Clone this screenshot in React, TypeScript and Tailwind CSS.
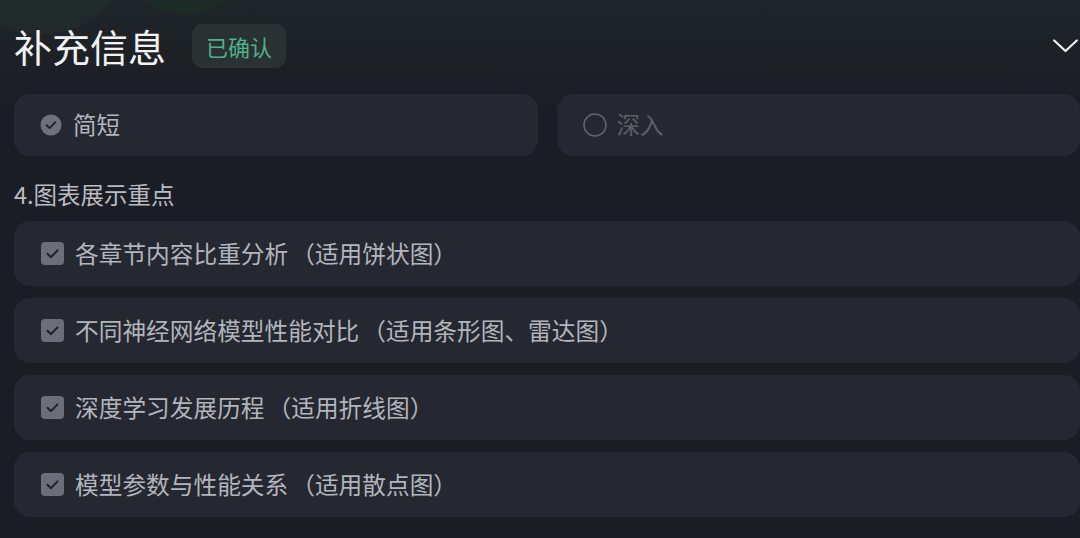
import React from "react";

const FONT = { fontFamily: '"Noto Sans CJK SC", "Noto Sans", sans-serif' };

function CheckBox() {
  return (
    <svg width="23" height="23" viewBox="0 0 23 23" className="shrink-0">
      <rect x="0" y="0" width="23" height="23" rx="4" fill="#6c6f79" />
      <path d="M6.5 11.8 L10 15.2 L16.5 8.3" fill="none" stroke="#1d1f26" strokeWidth="1.9" strokeLinecap="round" strokeLinejoin="round" />
    </svg>
  );
}

function FilledRadio() {
  return (
    <svg width="24" height="24" viewBox="0 0 24 24" className="shrink-0">
      <circle cx="12" cy="12" r="10.5" fill="#6e717a" />
      <path d="M7.6 12.2 L10.7 15.1 L16.4 9.2" fill="none" stroke="#1f2128" strokeWidth="1.9" strokeLinecap="round" strokeLinejoin="round" />
    </svg>
  );
}

function EmptyRadio() {
  return (
    <svg width="24" height="24" viewBox="0 0 24 24" className="shrink-0">
      <circle cx="12" cy="12" r="11" fill="none" stroke="#5f626b" strokeWidth="1.6" />
    </svg>
  );
}

const items: [string, string][] = [
  ["各章节内容比重分析", "（适用饼状图）"],
  ["不同神经网络模型性能对比", "（适用条形图、雷达图）"],
  ["深度学习发展历程", "（适用折线图）"],
  ["模型参数与性能关系", "（适用散点图）"],
];

export default function App() {
  return (
    <div
      style={FONT}
      className="w-[1080px] h-[538px] overflow-hidden pl-[14px] bg-[radial-gradient(circle_at_40px_-62px,#202a2a_96px,transparent_97px),radial-gradient(circle_at_185px_-52px,#1d2b27_66px,transparent_67px),linear-gradient(180deg,#1f2528_0px,#1d2126_60px,#1b1d24_110px,#1b1d24_538px)]"
    >
      <div className="flex items-center pt-[24px] pr-[2px]">
        <div className="text-[38px] leading-none font-normal text-[#f2f2f2]">补充信息</div>
        <div className="ml-[26px] h-[44px] px-[14px] flex items-center rounded-[10px] bg-[#293133] text-[22px] text-[#4fb08a] leading-none">
          已确认
        </div>
        <svg width="25" height="14" viewBox="0 0 25 14" className="ml-auto">
          <path d="M1.2 1.5 L12.5 12 L23.8 1.5" fill="none" stroke="#f2f2f2" strokeWidth="2.2" strokeLinecap="round" strokeLinejoin="round" />
        </svg>
      </div>

      <div className="grid grid-cols-2 gap-[19px] mt-[26px]">
        <div className="h-[62px] rounded-[16px] bg-[#262831] flex items-center pl-[25px] gap-[10px]">
          <FilledRadio />
          <span className="text-[23.5px] text-[#b4b6bd]">简短</span>
        </div>
        <div className="h-[62px] rounded-[16px] bg-[#262831] flex items-center pl-[26px] gap-[10px]">
          <EmptyRadio />
          <span className="text-[23.5px] text-[#5c5f68]">深入</span>
        </div>
      </div>

      <div className="mt-[22px] text-[23.5px] leading-[32px] text-[#b9bbc1]">4.图表展示重点</div>

      <div className="mt-[11px] flex flex-col gap-[12px]">
        {items.map(([a, b]) => (
          <div key={a} className="h-[65px] rounded-[16px] bg-[#262831] flex items-center pl-[27px] gap-[11px]">
            <CheckBox />
            <span className="text-[23.7px] text-[#b3b5bc] whitespace-nowrap">
              {a}
              <span className="ml-[3px]">{b}</span>
            </span>
          </div>
        ))}
      </div>
    </div>
  );
}
